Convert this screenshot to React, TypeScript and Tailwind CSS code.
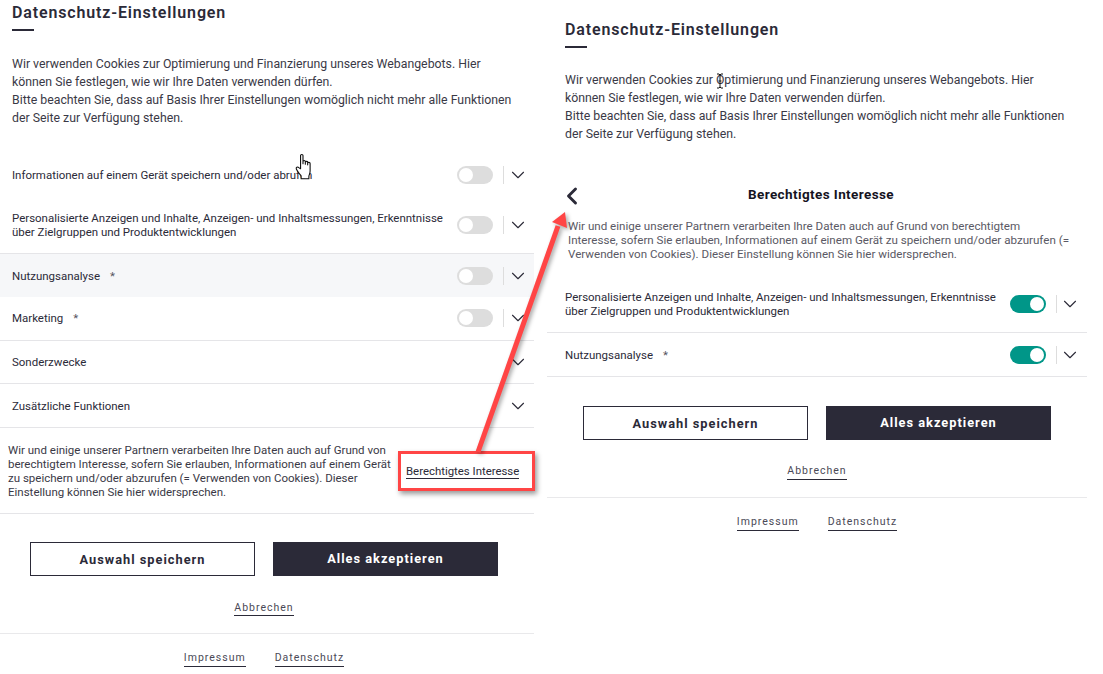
import React from "react";
import { ChevronDown, ChevronLeft } from "lucide-react";

function Toggle({ on = false }: { on?: boolean }) {
  return (
    <span className={on ? "flex h-[18px] w-9 shrink-0 items-center justify-end rounded-full bg-[#009688] px-[2px]" : "flex h-[18px] w-9 shrink-0 items-center justify-start rounded-full bg-[#dddddd] px-[2px]"}>
      <span className="h-[14px] w-[14px] rounded-full bg-white" />
    </span>
  );
}

function Row({ label, star, cls, on, toggle = true, pad = "pl-3 pr-[5px]", gap = "ml-[3px]" }: { label: React.ReactNode; star?: boolean; cls: string; on?: boolean; toggle?: boolean; pad?: string; gap?: string }) {
  return (
    <div className={`flex items-center ${pad} ${cls}`}>
      <div className="min-w-0 flex-1 whitespace-nowrap text-[11.47px] leading-[14px] text-[#2b2a38]">
        {label}
        {star && <span className="ml-[10px] text-[#55545f]">*</span>}
      </div>
      {toggle && <Toggle on={on} />}
      {toggle && <span className="ml-[10px] h-[18px] w-px shrink-0 bg-[#dddddd]" />}
      <ChevronDown className={`${gap} h-[22px] w-[22px] shrink-0 text-[#2b2a38]`} strokeWidth={1.2} />
    </div>
  );
}

function Buttons({ pad }: { pad: string }) {
  return (
    <div className={`flex gap-[18px] ${pad}`}>
      <button className="h-[34px] w-[225px] border border-[#2b2a38] bg-white pt-px text-[12.8px] font-bold tracking-[1px] text-[#2b2a38]">Auswahl speichern</button>
      <button className="h-[34px] w-[225px] bg-[#2b2a38] text-[12.8px] font-bold tracking-[1px] text-white">Alles akzeptieren</button>
    </div>
  );
}

const linkCls = "border-b border-[#2b2a38] pb-[1px] text-[10.5px] leading-[14px] tracking-[1px] text-[#4a4956]";
const cancelCls = "border-b border-[#2b2a38] text-[10.5px] leading-[14px] tracking-[1px] text-[#4a4956]";

function Intro() {
  return (
    <p className="whitespace-nowrap text-[12.3px] leading-[18px] text-[#3a3946]">
      Wir verwenden Cookies zur Optimierung und Finanzierung unseres Webangebots. Hier
      <br />
      können Sie festlegen, wie wir Ihre Daten verwenden dürfen.
      <br />
      Bitte beachten Sie, dass auf Basis Ihrer Einstellungen womöglich nicht mehr alle Funktionen
      <br />
      der Seite zur Verfügung stehen.
    </p>
  );
}

function Title() {
  return (
    <>
      <h1 className="h-6 pt-px text-[16px] font-semibold leading-6 tracking-[0.85px] text-[#2b2a38]">Datenschutz-Einstellungen</h1>
      <div className="mt-[5px] h-[2px] w-[22px] bg-[#2b2a38]" />
    </>
  );
}

const personal = (
  <>
    Personalisierte Anzeigen und Inhalte, Anzeigen- und Inhaltsmessungen, Erkenntnisse
    <br />
    über Zielgruppen und Produktentwicklungen
  </>
);

export default function App() {
  return (
    <div className="relative flex h-[674px] w-[1103px] overflow-hidden bg-white" style={{ fontFamily: "Roboto, sans-serif" }}>
      <section className="w-[534px] shrink-0">
        <div className="pl-3">
          <Title />
          <div className="mt-6">
            <Intro />
          </div>
        </div>
        <div className="mt-[26px]">
          <Row label="Informationen auf einem Gerät speichern und/oder abrufen" cls="h-[44px]" />
          <Row label={personal} cls="h-[57px] border-b border-[#e5e5e8]" />
          <Row label="Nutzungsanalyse" star cls="h-[43px] bg-[#f6f7f9]" />
          <Row label="Marketing" star cls="h-[44px] border-b border-[#e5e5e8] pb-px" />
          <Row label="Sonderzwecke" toggle={false} cls="h-[43px] border-b border-[#e5e5e8]" />
          <Row label="Zusätzliche Funktionen" toggle={false} cls="h-[44px] border-b border-[#e5e5e8]" />
        </div>
        <div className="flex h-[86px] items-center border-b border-[#e5e5e8] pl-2">
          <p className="w-[398px] whitespace-nowrap text-[11.5px] leading-[14px] text-[#3a3946]">
            Wir und einige unserer Partnern verarbeiten Ihre Daten auch auf Grund von
            <br />
            berechtigtem Interesse, sofern Sie erlauben, Informationen auf einem Gerät
            <br />
            zu speichern und/oder abzurufen (= Verwenden von Cookies). Dieser
            <br />
            Einstellung können Sie hier widersprechen.
          </p>
          <a className="mt-[2px] border-b border-[#2b2a38] text-[11.4px] leading-[13px] text-[#2b2a38]">Berechtigtes Interesse</a>
        </div>
        <div className="mt-7">
          <Buttons pad="pl-[30px]" />
        </div>
        <div className="mt-[25px] flex justify-center pr-[6px]">
          <a className={cancelCls}>Abbrechen</a>
        </div>
        <div className="mt-[17px] flex justify-center gap-[29px] border-t border-[#e9e9eb] pr-[6px] pt-[17px]">
          <a className={linkCls}>Impressum</a>
          <a className={linkCls}>Datenschutz</a>
        </div>
      </section>

      <section className="ml-[13px] w-[540px] shrink-0 pt-[17px]">
        <div className="pl-[18px]">
          <Title />
          <div className="mt-[23px]">
            <Intro />
          </div>
        </div>
        <div className="relative mt-[39px] flex h-6 items-center justify-center">
          <ChevronLeft className="absolute left-[11px] top-0 h-7 w-7 text-[#2b2a38]" strokeWidth={2.5} />
          <h2 className="pl-2 text-[13.5px] font-bold tracking-[0.4px] text-[#15141f]">Berechtigtes Interesse</h2>
        </div>
        <p className="mt-[13px] whitespace-nowrap pl-[21px] text-[11.6px] leading-[14px] text-[#5a5964]">
          Wir und einige unserer Partnern verarbeiten Ihre Daten auch auf Grund von berechtigtem
          <br />
          Interesse, sofern Sie erlauben, Informationen auf einem Gerät zu speichern und/oder abzurufen (=
          <br />
          Verwenden von Cookies). Dieser Einstellung können Sie hier widersprechen.
        </p>
        <div className="mt-4">
          <Row label={personal} on pad="pl-[18px] pr-[6px]" gap="ml-[2px]" cls="h-[56px] border-b border-[#e5e5e8] pb-px" />
          <Row label="Nutzungsanalyse" star on pad="pl-[18px] pr-[6px]" gap="ml-[2px]" cls="h-[44px] border-b border-[#e5e5e8]" />
        </div>
        <div className="mt-[29px]">
          <Buttons pad="pl-9" />
        </div>
        <div className="mt-6 flex justify-center">
          <a className={linkCls}>Abbrechen</a>
        </div>
        <div className="mt-[17px] flex justify-center gap-[29px] border-t border-[#e9e9eb] pt-[17px]">
          <a className={linkCls}>Impressum</a>
          <a className={linkCls}>Datenschutz</a>
        </div>
      </section>

      {/* Annotations lying over the screenshots */}
      <div className="absolute left-[398px] top-[451px] h-[40px] w-[137px] border-[3px] border-[#ff4545] shadow-[2px_3px_5px_rgba(0,0,0,0.4)]" />
      <svg className="pointer-events-none absolute left-0 top-0 drop-shadow-[2px_2px_2px_rgba(0,0,0,0.35)]" width="1103" height="674" viewBox="0 0 1103 674">
        <line x1="478" y1="452" x2="558" y2="226" stroke="#ff4545" strokeWidth="5" />
        <polygon points="565,212 552,222 567,228" fill="#ff4545" />
      </svg>
      <svg className="pointer-events-none absolute left-[295px] top-[153px]" width="20" height="27" viewBox="0 0 18 24">
        <path d="M5 14V2.2C5 .8 7.2 .8 7.2 2.2V9.5V7.5C7.2 6.3 9.3 6.3 9.3 7.5V10V8.2C9.3 7.1 11.4 7.1 11.4 8.2V10.5V9C11.4 8 13.6 8 13.6 9.2V16C13.6 18 13 19 12.5 20.5V23H5.5V20.5C4 18.5 2 16 1.2 14.2C.6 12.8 2.3 11.8 3.4 13Z" fill="#fff" stroke="#111" strokeWidth="1" strokeLinejoin="round" />
      </svg>
      <svg className="pointer-events-none absolute left-[716px] top-[73px]" width="8" height="16" viewBox="0 0 8 16">
        <path d="M1 1H3L4 2L5 1H7M4 2V14M1 15H3L4 14L5 15H7M2.5 8H5.5" fill="none" stroke="#111" strokeWidth="1" />
      </svg>
    </div>
  );
}
